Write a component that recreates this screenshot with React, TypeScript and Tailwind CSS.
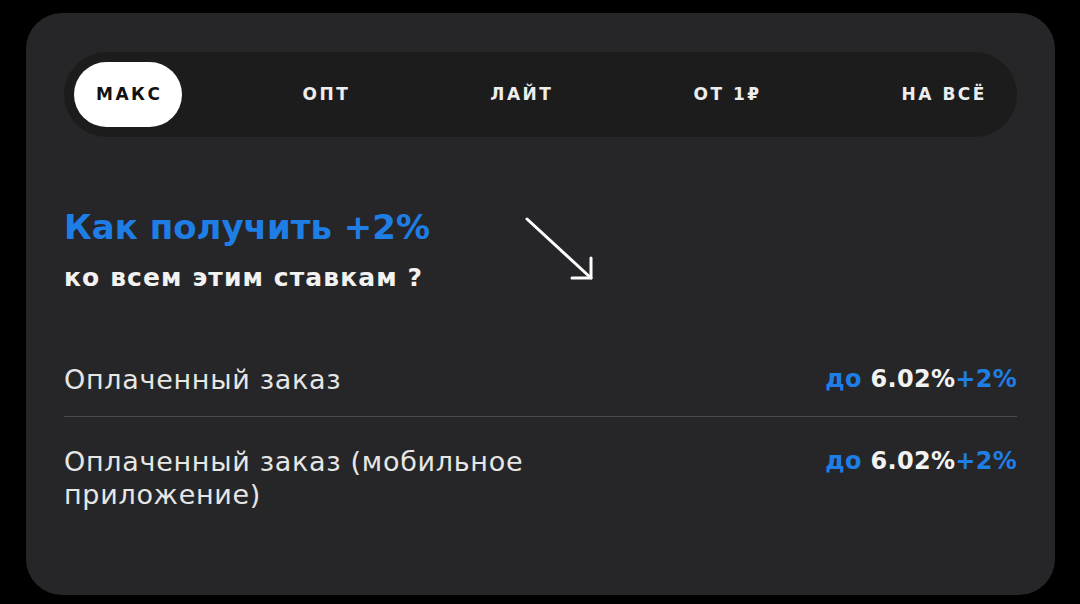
import React, { useState } from "react";

const tabs = ["МАКС", "ОПТ", "ЛАЙТ", "ОТ 1₽", "НА ВСЁ"];

const rows = [
  { label: "Оплаченный заказ", value: "6.02%" },
  { label: "Оплаченный заказ (мобильное приложение)", value: "6.02%" },
];

export default function App() {
  const [active, setActive] = useState(0);

  return (
    <div
      className="w-[1080px] h-[604px] bg-black pl-[26px] pt-[13px]"
      style={{ fontFamily: '"DejaVu Sans", "Noto Sans", sans-serif' }}
    >
      <div className="w-[1029px] h-[582px] rounded-[36px] bg-[#262628] px-[38px] pt-[39px]">
        <div className="h-[85px] rounded-full bg-[#1c1c1c] px-[10px] flex items-center justify-between">
          {tabs.map((t, i) => (
            <button
              key={t}
              onClick={() => setActive(i)}
              className={
                i === active
                  ? "h-[65px] pl-[22px] pr-[20px] rounded-full bg-white text-[#111] text-[17px] font-bold tracking-[2.5px]"
                  : "h-[65px] pl-[22px] pr-[20px] rounded-full text-[#ededed] text-[17px] font-bold tracking-[2.5px]"
              }
            >
              {t}
            </button>
          ))}
        </div>

        <div className="mt-[68px] flex items-start">
          <div>
            <h2 className="text-[34px] leading-[44px] font-bold text-[#1f7ee6]">
              Как получить +2%
            </h2>
            <p className="mt-[14px] text-[25px] leading-[30px] font-bold tracking-[1.1px] text-[#f2f2f2]">
              ко всем этим ставкам ?
            </p>
          </div>
          <svg
            className="ml-[95px] mt-[11px]"
            width="72"
            height="68"
            viewBox="0 0 72 68"
            fill="none"
            stroke="white"
            strokeWidth="3"
            strokeLinecap="round"
            strokeLinejoin="round"
          >
            <path d="M2 3 L66 62" />
            <path d="M47 62 H66 V42" />
          </svg>
        </div>

        <div className="mt-[70px]">
          {rows.map((r, i) => (
            <div
              key={i}
              className={
                i === 0
                  ? "flex justify-between items-start pb-[20px] border-b border-[#4b4b4f]"
                  : "flex justify-between items-start pt-[28px]"
              }
            >
              <span className="w-[500px] text-[27px] leading-[33px] tracking-[0.7px] text-[#e6e6e6]">
                {r.label}
              </span>
              <span className="text-[24px] leading-[33px] font-bold tracking-[0.3px] text-[#f2f2f2]">
                <span className="text-[#1f7ee6]">до </span>
                {r.value}
                <span className="text-[#1f7ee6]">+2%</span>
              </span>
            </div>
          ))}
        </div>
      </div>
    </div>
  );
}
